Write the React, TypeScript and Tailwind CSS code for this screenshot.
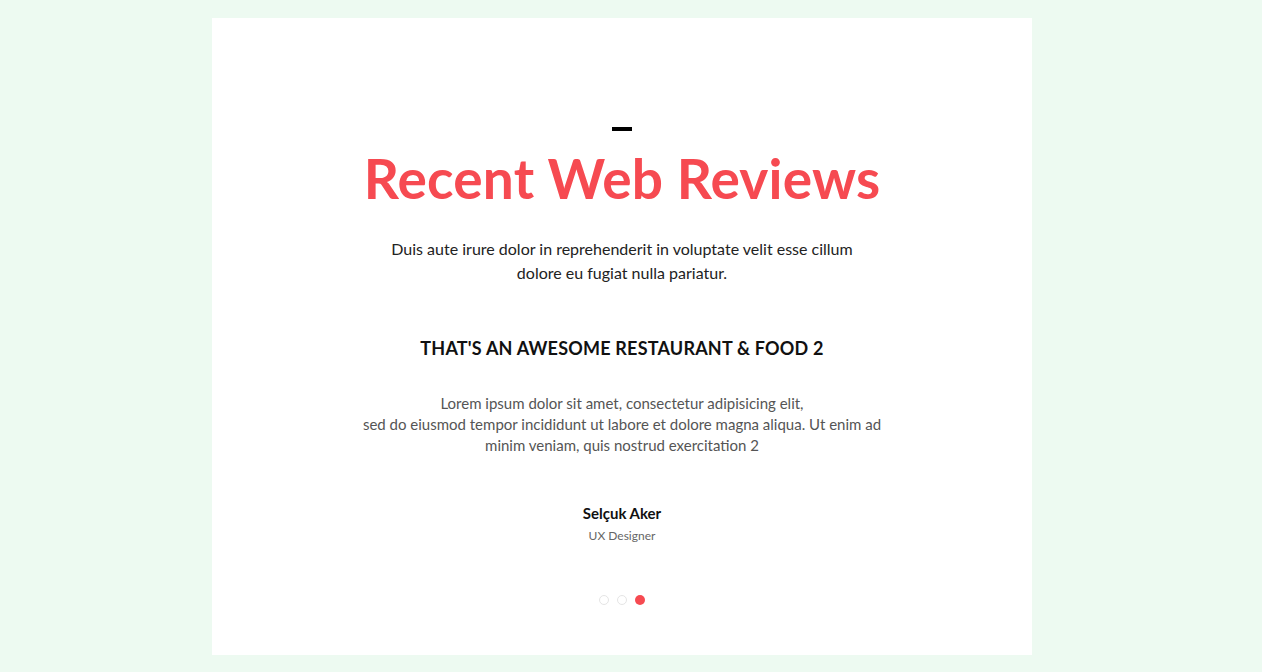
import React from "react";

export default function App() {
  return (
    <div className="min-h-[672px] w-full bg-[#edfaf1] pt-[18px] pb-[17px]" style={{ fontFamily: "Lato, 'Open Sans', sans-serif" }}>
      <div className="ml-[212px] w-[820px] h-[637px] bg-white flex flex-col items-center">
        <div className="mt-[109px] w-[20px] h-[4px] bg-black" />
        <h1 className="mt-[15px] text-[55px] leading-[64px] font-bold text-[#f64a51] tracking-[0.2px]">Recent Web Reviews</h1>
        <p className="mt-[27px] w-[480px] text-center text-[16px] leading-[24px] text-[#222]">
          Duis aute irure dolor in reprehenderit in voluptate velit esse cillum dolore eu fugiat nulla pariatur.
        </p>
        <h3 className="mt-[51px] text-[18px] leading-[24px] font-bold text-[#111] tracking-[0.2px]">THAT'S AN AWESOME RESTAURANT &amp; FOOD 2</h3>
        <p className="mt-[33px] w-[540px] text-center text-[15px] leading-[21px] text-[#555]">
          Lorem ipsum dolor sit amet, consectetur adipisicing elit,<br />
          sed do eiusmod tempor incididunt ut labore et dolore magna aliqua. Ut enim ad minim veniam, quis nostrud exercitation 2
        </p>
        <div className="mt-[47px] text-[15px] leading-[20px] font-bold text-[#111]">Selçuk Aker</div>
        <div className="mt-[5px] text-[12px] leading-[16px] text-[#666]">UX Designer</div>
        <div className="mt-[51px] flex gap-[8px]">
          <span className="w-[10px] h-[10px] rounded-full border border-[#e5e5e5] bg-white" />
          <span className="w-[10px] h-[10px] rounded-full border border-[#e5e5e5] bg-white" />
          <span className="w-[10px] h-[10px] rounded-full bg-[#f64a51]" />
        </div>
      </div>
    </div>
  );
}
